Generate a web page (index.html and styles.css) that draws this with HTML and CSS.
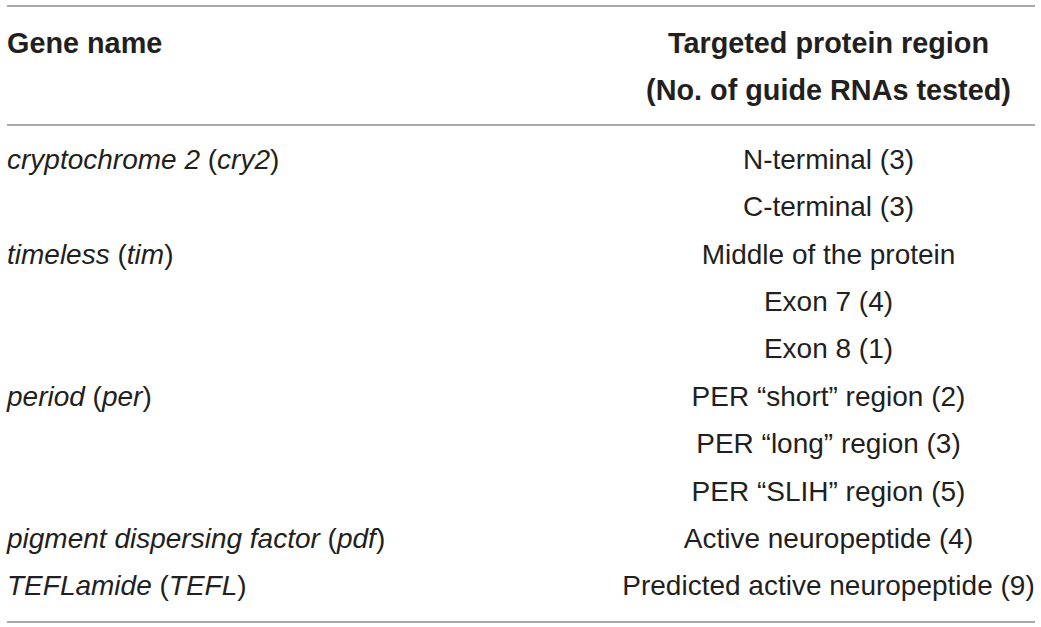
FILE: index.html
```html
<!DOCTYPE html>
<html lang="en">
<head>
<meta charset="utf-8">
<title>Gene targets</title>
<link rel="stylesheet" href="styles.css">
</head>
<body>
<table class="gene-table">
  <thead>
    <tr>
      <th class="col-gene">Gene name</th>
      <th class="col-region">Targeted protein region<br>(No. of guide RNAs tested)</th>
    </tr>
  </thead>
  <tbody>
    <tr class="first">
      <td class="col-gene" rowspan="2"><i>cryptochrome 2</i> (<i>cry2</i>)</td>
      <td class="col-region">N-terminal (3)</td>
    </tr>
    <tr>
      <td class="col-region">C-terminal (3)</td>
    </tr>
    <tr>
      <td class="col-gene" rowspan="3"><i>timeless</i> (<i>tim</i>)</td>
      <td class="col-region">Middle of the protein</td>
    </tr>
    <tr>
      <td class="col-region">Exon 7 (4)</td>
    </tr>
    <tr>
      <td class="col-region">Exon 8 (1)</td>
    </tr>
    <tr>
      <td class="col-gene" rowspan="3"><i>period</i> (<i>per</i>)</td>
      <td class="col-region">PER “short” region (2)</td>
    </tr>
    <tr>
      <td class="col-region">PER “long” region (3)</td>
    </tr>
    <tr>
      <td class="col-region">PER “SLIH” region (5)</td>
    </tr>
    <tr>
      <td class="col-gene"><i>pigment dispersing factor</i> (<i>pdf</i>)</td>
      <td class="col-region">Active neuropeptide (4)</td>
    </tr>
    <tr class="last">
      <td class="col-gene"><i>TEFLamide</i> (<i>TEFL</i>)</td>
      <td class="col-region">Predicted active neuropeptide (9)</td>
    </tr>
  </tbody>
</table>
</body>
</html>
```

FILE: styles.css
```css
html, body {
  margin: 0;
  padding: 0;
  background: #ffffff;
}

body {
  font-family: "Liberation Sans", Arial, sans-serif;
  color: #231f20;
}

.gene-table {
  margin: 5px 0 0 7px;
  width: 1028px;
  border-collapse: collapse;
  table-layout: fixed;
  font-size: 28px;
  line-height: 47.4px;
}

.gene-table thead tr {
  border-top: 2px solid #a9a9a9;
  border-bottom: 2px solid #a9a9a9;
}

.gene-table tbody tr.last {
  border-bottom: 2px solid #a9a9a9;
}

.gene-table th,
.gene-table td {
  padding: 0;
  vertical-align: top;
  white-space: nowrap;
}

.gene-table th {
  font-weight: bold;
  font-size: 28.8px;
  padding-top: 13px;
  padding-bottom: 9px;
}

.gene-table .col-gene {
  width: 615px;
  text-align: left;
}

.gene-table .col-region {
  width: 413px;
  text-align: center;
}

.gene-table tr.first td {
  padding-top: 10px;
}

.gene-table tr.last td {
  padding-bottom: 11px;
}

.gene-table i {
  font-style: italic;
}
```
